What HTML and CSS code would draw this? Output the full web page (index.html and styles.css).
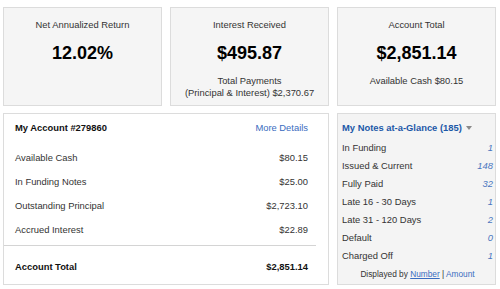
FILE: index.html
```html
<!DOCTYPE html>
<html lang="en">
<head>
  <meta charset="UTF-8" />
  <title>Account Summary</title>
  <link rel="stylesheet" href="styles.css">
</head>
<body>
  <div class="dashboard">
    <div class="stat-box">
      <div class="stat-title">Net Annualized Return</div>
      <div class="stat-value">12.02%</div>
    </div>
    <div class="stat-box">
      <div class="stat-title">Interest Received</div>
      <div class="stat-value">$495.87</div>
      <div class="stat-sub">Total Payments<br>(Principal &amp; Interest) $2,370.67</div>
    </div>
    <div class="stat-box">
      <div class="stat-title">Account Total</div>
      <div class="stat-value">$2,851.14</div>
      <div class="stat-sub">Available Cash $80.15</div>
    </div>

    <div class="account">
      <div class="account-head">
        <span class="account-title">My Account #279860</span>
        <a href="#" class="more-link">More Details</a>
      </div>
      <div class="account-row"><span>Available Cash</span><span>$80.15</span></div>
      <div class="account-row"><span>In Funding Notes</span><span>$25.00</span></div>
      <div class="account-row"><span>Outstanding Principal</span><span>$2,723.10</span></div>
      <div class="account-row"><span>Accrued Interest</span><span>$22.89</span></div>
      <div class="account-total"><span>Account Total</span><span>$2,851.14</span></div>
    </div>

    <div class="notes">
      <div class="notes-title">My Notes at-a-Glance (185) <span class="arrow"></span></div>
      <div class="notes-row"><span>In Funding</span><a href="#">1</a></div>
      <div class="notes-row"><span>Issued &amp; Current</span><a href="#">148</a></div>
      <div class="notes-row"><span>Fully Paid</span><a href="#">32</a></div>
      <div class="notes-row"><span>Late 16 - 30 Days</span><a href="#">1</a></div>
      <div class="notes-row"><span>Late 31 - 120 Days</span><a href="#">2</a></div>
      <div class="notes-row"><span>Default</span><a href="#">0</a></div>
      <div class="notes-row"><span>Charged Off</span><a href="#">1</a></div>
      <div class="notes-foot">Displayed by <a href="#" class="active">Number</a> | <a href="#">Amount</a></div>
    </div>
  </div>
</body>
</html>
```

FILE: styles.css
```css
body {
  margin: 0;
  padding: 7px 4px 0 3px;
  font-family: "Liberation Sans", Arial, sans-serif;
  font-size: 9.4px;
  color: #333;
  background: #fff;
}
a {
  color: #3a6cc0;
  text-decoration: none;
}
.dashboard {
  display: grid;
  grid-template-columns: 159px 159px 159px;
  grid-template-rows: 99px 172px;
  column-gap: 8px;
  row-gap: 7px;
}
.stat-box {
  box-sizing: border-box;
  background: #f5f5f5;
  border: 1px solid #dcdcdc;
  text-align: center;
  padding-top: 11px;
}
.stat-title {
  line-height: 12px;
}
.stat-value {
  margin-top: 11px;
  line-height: 22px;
  font-size: 18px;
  font-weight: bold;
  color: #000;
}
.stat-sub {
  margin-top: 11px;
  line-height: 12px;
}
.account {
  grid-column: span 2;
  box-sizing: border-box;
  border: 1px solid #dcdcdc;
  padding-top: 8px;
}
.account-head,
.account-row,
.account-total {
  display: flex;
  justify-content: space-between;
  padding: 0 20px 0 11px;
}
.account-head {
  line-height: 12px;
  margin-bottom: 12px;
}
.account-title {
  font-weight: bold;
  color: #111;
}
.account-row {
  line-height: 24px;
}
.account-total {
  margin-top: 3px;
  margin-right: 12px;
  padding-right: 8px;
  padding-top: 10px;
  line-height: 22px;
  border-top: 1px solid #d4d4d4;
  font-weight: bold;
  color: #111;
}
.notes {
  box-sizing: border-box;
  background: #f4f4f4;
  border: 1px solid #dcdcdc;
  padding: 8px 2px 0 4px;
}
.notes-title {
  line-height: 12px;
  margin-bottom: 5px;
  font-weight: bold;
  color: #1c58a8;
}
.arrow {
  display: inline-block;
  margin-left: 2px;
  vertical-align: 1px;
  border-left: 3px solid transparent;
  border-right: 3px solid transparent;
  border-top: 4px solid #8a8a8a;
}
.notes-row {
  display: flex;
  justify-content: space-between;
  line-height: 18px;
}
.notes-row a {
  font-style: italic;
  color: #4a76c0;
}
.notes-foot {
  line-height: 18px;
  text-align: center;
  font-size: 8.3px;
}
.notes-foot a.active {
  text-decoration: underline;
}
```
